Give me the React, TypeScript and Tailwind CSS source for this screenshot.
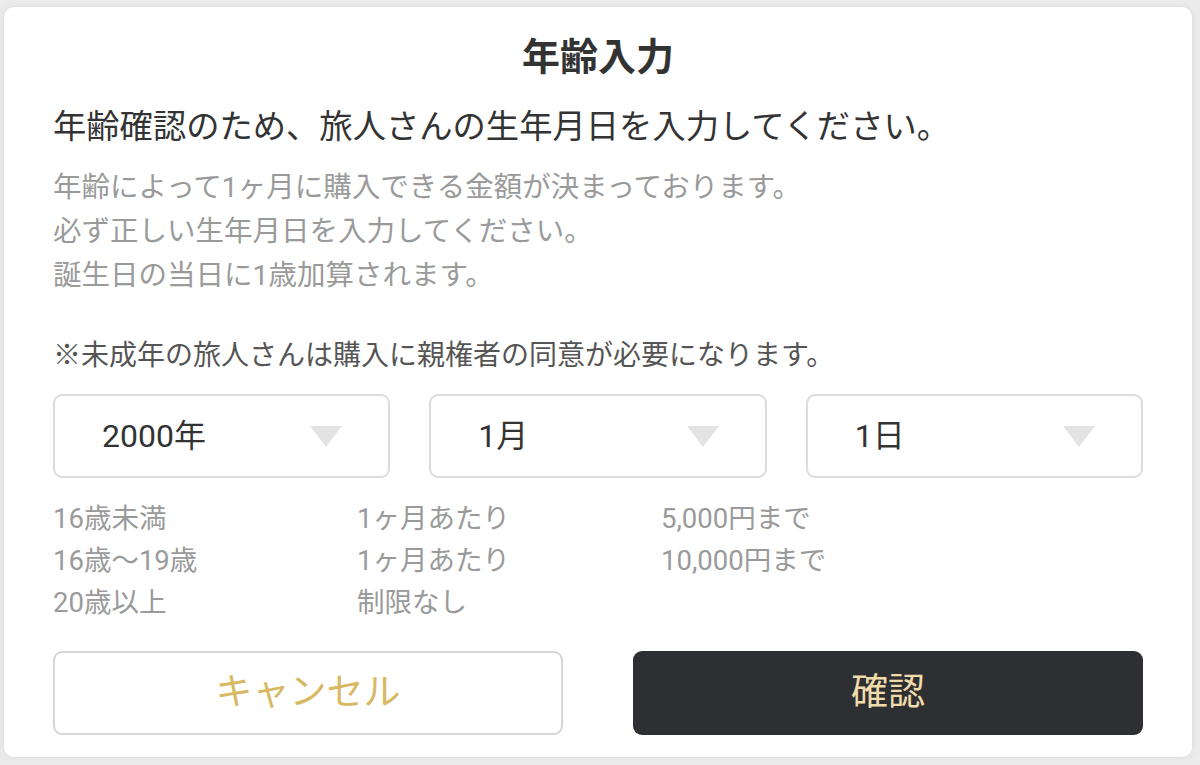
const Caret = () => (
  <svg width="32" height="21" viewBox="0 0 32 21" className="shrink-0">
    <polygon points="0,0 32,0 16,21" fill="#e3e3e3" />
  </svg>
);

const Select = ({ value }: { value: string }) => (
  <div className="flex-1 h-[84px] rounded-[9px] border-2 border-[#dcdcdc] bg-white flex items-center justify-between pl-[47px] pr-[46px]">
    <span className="text-[32px] leading-none text-[#333]">{value}</span>
    <Caret />
  </div>
);

const limits = [
  ["16歳未満", "1ヶ月あたり", "5,000円まで"],
  ["16歳〜19歳", "1ヶ月あたり", "10,000円まで"],
  ["20歳以上", "制限なし", ""],
];

export default function App() {
  return (
    <div
      className="w-[1200px] h-[765px] bg-[#ebebeb] pt-[7px] pl-[4px] pr-[8px] pb-[8px]"
      style={{ fontFamily: "Roboto, 'Noto Sans CJK JP', sans-serif" }}
    >
      <div className="h-full bg-white rounded-[10px] shadow-[0_0_6px_rgba(0,0,0,0.08)] px-[49px] pt-[26px] pb-[22px] flex flex-col">
        {/* Title */}
        <h1 className="text-center text-[38px] leading-[48px] font-bold text-[#333]">年齢入力</h1>

        <p className="mt-[22px] text-[33.3px] leading-[48px] text-[#333]">
          年齢確認のため、旅人さんの生年月日を入力してください。
        </p>

        <div className="mt-[15px] text-[28.5px] leading-[44px] text-[#9a9a9a]">
          <p>年齢によって1ヶ月に購入できる金額が決まっております。</p>
          <p>必ず正しい生年月日を入力してください。</p>
          <p>誕生日の当日に1歳加算されます。</p>
        </div>

        <p className="mt-[36px] text-[28px] leading-[44px] text-[#555]">
          ※未成年の旅人さんは購入に親権者の同意が必要になります。
        </p>

        {/* Date selects */}
        <div className="mt-[16px] flex gap-[39px]">
          <Select value="2000年" />
          <Select value="1月" />
          <Select value="1日" />
        </div>

        {/* Limits table */}
        <div className="mt-[20px] text-[27.5px] leading-[42px] text-[#9a9a9a]">
          {limits.map((row) => (
            <div key={row[0]} className="flex">
              <span className="w-[304px]">{row[0]}</span>
              <span className="w-[304px]">{row[1]}</span>
              <span>{row[2]}</span>
            </div>
          ))}
        </div>

        {/* Buttons */}
        <div className="mt-[27px] flex justify-between">
          <button className="w-[510px] h-[84px] rounded-[9px] border-2 border-[#d6d6d6] bg-white text-[37px] text-[#d7b863]">
            キャンセル
          </button>
          <button className="w-[510px] h-[84px] rounded-[9px] bg-[#2e2f33] text-[37px] text-[#f0dcaa]">
            確認
          </button>
        </div>
      </div>
    </div>
  );
}
